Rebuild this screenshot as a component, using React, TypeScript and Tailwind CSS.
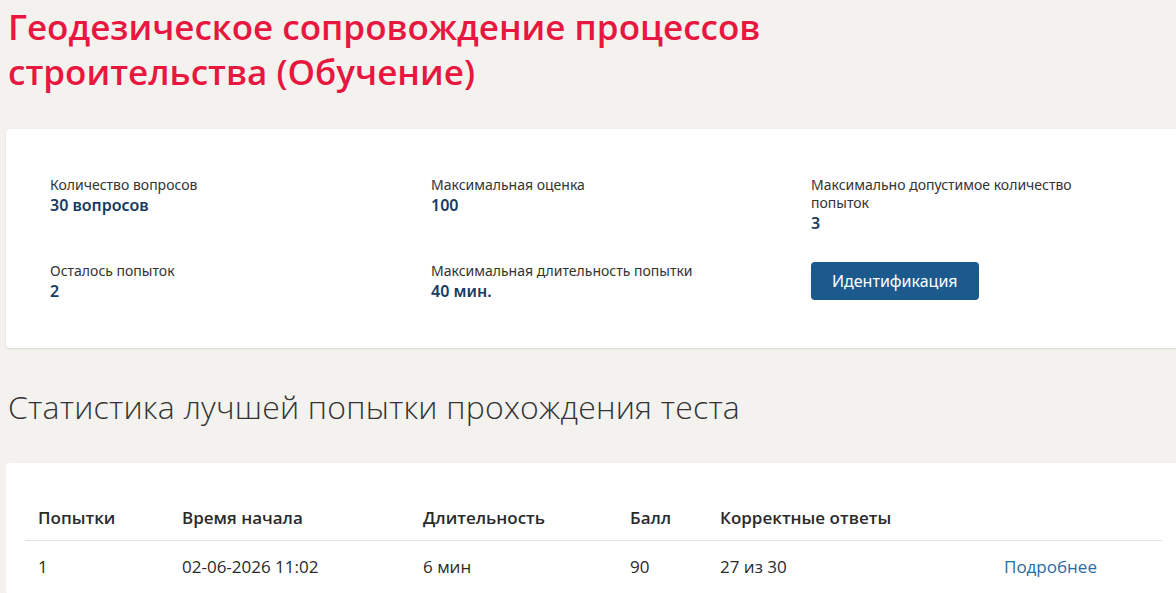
import React from 'react';

const stats = [
  { label: 'Количество вопросов', value: '30 вопросов' },
  { label: 'Максимальная оценка', value: '100' },
  { label: 'Максимально допустимое количество попыток', value: '3' },
  { label: 'Осталось попыток', value: '2' },
  { label: 'Максимальная длительность попытки', value: '40 мин.' },
];

const attempts = [
  { n: '1', start: '02-06-2026 11:02', duration: '6 мин', score: '90', correct: '27 из 30' },
];

export default function App() {
  return (
    <main className="min-h-screen w-full bg-[#f3f2ef] overflow-hidden font-['Open_Sans',sans-serif] text-[#222]">
      <h1 className="pl-2 pt-[4px] text-[35px] leading-[45px] font-semibold text-[#e8173f] [font-stretch:95%] max-w-[800px]">
        Геодезическое сопровождение процессов строительства (Обучение)
      </h1>

      <section className="ml-[6px] mt-[35px] w-[1200px] h-[219px] bg-white rounded-[4px] shadow-[0_1px_2px_rgba(0,0,0,0.12)] pl-[44px] pt-[47px]">
        <div className="grid grid-cols-[381px_380px_300px] gap-y-[28px]">
          {stats.map((s) => (
            <div key={s.label} className="font-['Noto_Sans',sans-serif]">
              <div className="text-[14px] leading-[18px] text-[#333] max-w-[290px]">{s.label}</div>
              <div className="text-[16px] leading-[22px] font-semibold text-[#163a61]">{s.value}</div>
            </div>
          ))}
          <div>
            <button className="h-[38px] px-[21px] rounded-[4px] bg-[#1c5a8e] text-white text-[16px] font-['Noto_Sans',sans-serif]">
              Идентификация
            </button>
          </div>
        </div>
      </section>

      <h2 className="pl-2 mt-[39px] text-[32px] leading-[40px] font-light tracking-[0.2px] text-[#333]">
        Статистика лучшей попытки прохождения теста
      </h2>

      <section className="ml-[6px] mt-[36px] w-[1200px] bg-white rounded-[4px] pl-[19px] pt-[33px]">
        <table className="w-[1137px] text-[17px] text-[#2a2a2a] border-collapse">
          <thead>
            <tr className="border-b border-[#e2e0dc]">
              <th className="w-[157px] pl-[13px] h-[44px] text-left font-semibold">Попытки</th>
              <th className="w-[241px] text-left font-semibold">Время начала</th>
              <th className="w-[207px] text-left font-semibold">Длительность</th>
              <th className="w-[90px] text-left font-semibold">Балл</th>
              <th className="w-[284px] text-left font-semibold">Корректные ответы</th>
              <th></th>
            </tr>
          </thead>
          <tbody>
            {attempts.map((a) => (
              <tr key={a.n} className="border-b border-[#e2e0dc] font-normal">
                <td className="pl-[13px] h-[53px]">{a.n}</td>
                <td>{a.start}</td>
                <td>{a.duration}</td>
                <td>{a.score}</td>
                <td>{a.correct}</td>
                <td className="text-[#2c6aa0]">Подробнее</td>
              </tr>
            ))}
          </tbody>
        </table>
      </section>
    </main>
  );
}
